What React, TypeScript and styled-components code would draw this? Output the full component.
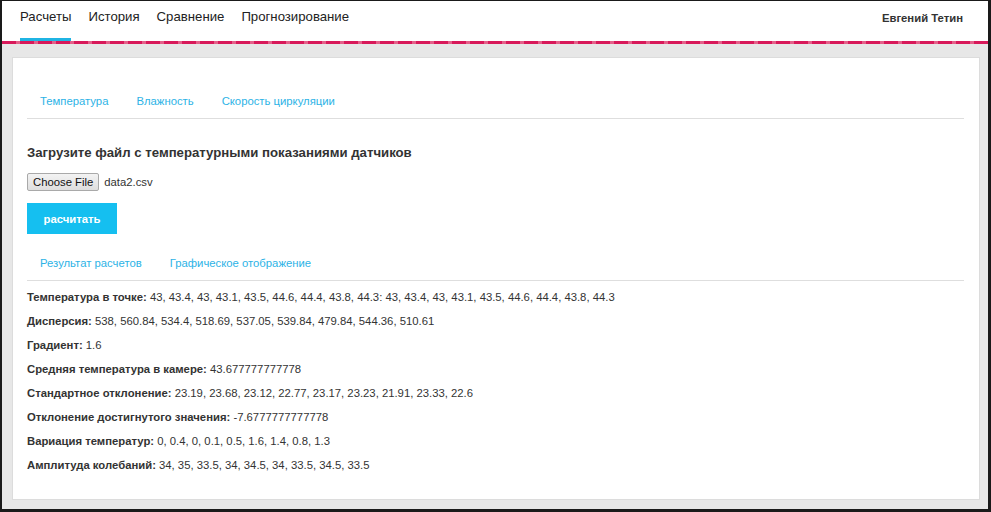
import React from "react";
import styled, { createGlobalStyle } from "styled-components";

const Global = createGlobalStyle`
  html, body { margin: 0; padding: 0; background: #fff; }
  body { font-family: "Liberation Sans", Arial, sans-serif; color: #333; }
  * { box-sizing: border-box; }
`;

const Frame = styled.div`
  width: 991px;
  height: 512px;
  border-style: solid;
  border-color: #1a1a1a;
  border-width: 1px 3px 3px 2px;
  background: #e7e7e7;
  display: flex;
  flex-direction: column;
  overflow: hidden;
`;

const Header = styled.header`
  height: 40px;
  background: #fff;
  display: flex;
  align-items: stretch;
  justify-content: space-between;
  padding: 0 25px 0 18px;
`;

const Nav = styled.nav`
  display: flex;
  gap: 17px;
`;

const NavItem = styled.a<{ $active?: boolean }>`
  font-size: 13.2px;
  line-height: 16px;
  color: #222;
  text-decoration: none;
  padding-top: 8px;
  border-bottom: 3px solid ${(p) => (p.$active ? "#1fb4e3" : "transparent")};
`;

const User = styled.div`
  font-size: 11.3px;
  font-weight: bold;
  color: #333;
  padding-top: 11px;
`;

const Stripe = styled.div`
  height: 3px;
  background: repeating-linear-gradient(
    90deg,
    #d8195a 0px,
    #d8195a 14px,
    #e5608a 14px,
    #e5608a 18px
  );
`;

const Main = styled.main`
  flex: 1;
  padding: 13px 8px 9px 10px;
  display: flex;
`;

const Card = styled.section`
  flex: 1;
  background: #fff;
  border: 1px solid #dcdcdc;
  padding: 28px 15px 0 14px;
`;

const Tabs = styled.div<{ $mb: number }>`
  display: flex;
  border-bottom: 1px solid #dedede;
  margin-bottom: ${(p) => p.$mb}px;
`;

const Tab = styled.a`
  font-size: 11.3px;
  line-height: 14px;
  color: #2db3e6;
  padding: 8px 13px 10px 13px;
  margin-right: 2px;
  text-decoration: none;
`;

const Heading = styled.h3`
  font-size: 13.2px;
  font-weight: bold;
  color: #333;
  margin: 0 0 12px 0;
  line-height: 16px;
`;

const FileRow = styled.div`
  display: flex;
  align-items: center;
  gap: 5px;
  font-size: 11.3px;
  color: #333;
  margin-bottom: 12px;
`;

const FileButton = styled.span`
  display: inline-block;
  font-family: "Liberation Sans", Arial, sans-serif;
  font-size: 11.3px;
  color: #111;
  background: linear-gradient(#f3f3f3, #dedede);
  border: 1px solid #a9a9a9;
  border-radius: 2px;
  padding: 1px 5px;
  line-height: 14px;
`;

const Primary = styled.button`
  display: block;
  width: 90px;
  height: 31px;
  background: #15bff0;
  color: #fff;
  font-family: "Liberation Sans", Arial, sans-serif;
  font-size: 11.3px;
  font-weight: bold;
  border: none;
  margin: 0 0 14px 0;
`;

const Row = styled.p`
  font-size: 11.3px;
  margin: 0 0 10px 0;
  line-height: 14px;
  color: #333;
  b { font-weight: bold; color: #333; }
`;

const results: [string, string][] = [
  ["Температура в точке:", "43, 43.4, 43, 43.1, 43.5, 44.6, 44.4, 43.8, 44.3: 43, 43.4, 43, 43.1, 43.5, 44.6, 44.4, 43.8, 44.3"],
  ["Дисперсия:", "538, 560.84, 534.4, 518.69, 537.05, 539.84, 479.84, 544.36, 510.61"],
  ["Градиент:", "1.6"],
  ["Средняя температура в камере:", "43.677777777778"],
  ["Стандартное отклонение:", "23.19, 23.68, 23.12, 22.77, 23.17, 23.23, 21.91, 23.33, 22.6"],
  ["Отклонение достигнутого значения:", "-7.6777777777778"],
  ["Вариация температур:", "0, 0.4, 0, 0.1, 0.5, 1.6, 1.4, 0.8, 1.3"],
  ["Амплитуда колебаний:", "34, 35, 33.5, 34, 34.5, 34, 33.5, 34.5, 33.5"],
];

export default function App() {
  return (
    <>
      <Global />
      <Frame>
        <Header>
          <Nav>
            <NavItem $active>Расчеты</NavItem>
            <NavItem>История</NavItem>
            <NavItem>Сравнение</NavItem>
            <NavItem>Прогнозирование</NavItem>
          </Nav>
          <User>Евгений Тетин</User>
        </Header>
        <Stripe />
        <Main>
          <Card>
            <Tabs $mb={26}>
              <Tab>Температура</Tab>
              <Tab>Влажность</Tab>
              <Tab>Скорость циркуляции</Tab>
            </Tabs>
            <Heading>Загрузите файл с температурными показаниями датчиков</Heading>
            <FileRow>
              <FileButton>Choose File</FileButton>
              <span>data2.csv</span>
            </FileRow>
            <Primary>расчитать</Primary>
            <Tabs $mb={9}>
              <Tab>Результат расчетов</Tab>
              <Tab>Графическое отображение</Tab>
            </Tabs>
            {results.map(([k, v]) => (
              <Row key={k}>
                <b>{k}</b> {v}
              </Row>
            ))}
          </Card>
        </Main>
      </Frame>
    </>
  );
}
